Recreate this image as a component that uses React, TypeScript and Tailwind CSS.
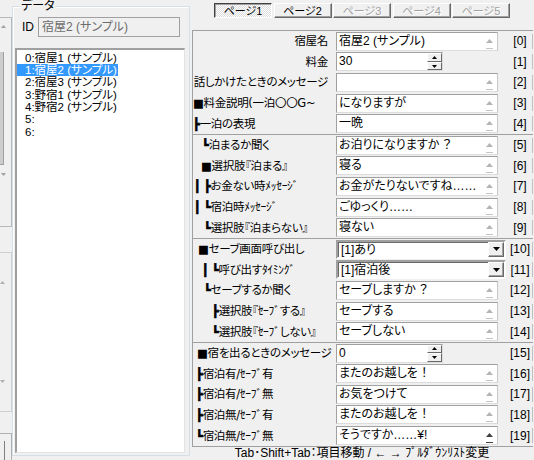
import React from "react";

type Kind = "text" | "spin" | "combo";
interface RowDef {
  label: string;
  align: "left" | "right";
  pl: string;
  kind: Kind;
  value: string;
  idx: number;
  dark?: boolean;
}

const sectionA: RowDef[] = [
  { label: "宿屋名", align: "right", pl: "", kind: "text", value: "宿屋2 (サンプル)", idx: 0 },
  { label: "料金", align: "right", pl: "", kind: "spin", value: "30", idx: 1 },
  { label: "話しかけたときのメッセージ", align: "right", pl: "", kind: "text", value: "", idx: 2 },
  { label: "■料金説明(一泊〇〇G~", align: "left", pl: "pl-[0px]", kind: "text", value: "になりますが", idx: 3 },
  { label: "┣一泊の表現", align: "left", pl: "pl-[0px]", kind: "text", value: "一晩", idx: 4 },
];
const sectionB: RowDef[] = [
  { label: "┗泊まるか聞く", align: "left", pl: "pl-[9px]", kind: "text", value: "お泊りになりますか ？", idx: 5 },
  { label: "■選択肢『泊まる』", align: "left", pl: "pl-[8px]", kind: "text", value: "寝る", idx: 6 },
  { label: "┃ ┣お金ない時ﾒｯｾｰｼﾞ", align: "left", pl: "pl-[1px]", kind: "text", value: "お金がたりないですね……", idx: 7 },
  { label: "┃ ┗宿泊時ﾒｯｾｰｼﾞ", align: "left", pl: "pl-[1px]", kind: "text", value: "ごゆっくり……", idx: 8 },
  { label: "┗選択肢『泊まらない』", align: "left", pl: "pl-[11px]", kind: "text", value: "寝ない", idx: 9 },
];
const sectionC: RowDef[] = [
  { label: "■セーブ画面呼び出し", align: "left", pl: "pl-[5px]", kind: "combo", value: "[1]あり", idx: 10 },
  { label: "┃ ┗呼び出すﾀｲﾐﾝｸﾞ", align: "left", pl: "pl-[9px]", kind: "combo", value: "[1]宿泊後", idx: 11 },
  { label: "┗セーブするか聞く", align: "left", pl: "pl-[11px]", kind: "text", value: "セーブしますか ？", idx: 12 },
  { label: "┣選択肢『ｾｰﾌﾞする』", align: "left", pl: "pl-[19px]", kind: "text", value: "セーブする", idx: 13 },
  { label: "┗選択肢『ｾｰﾌﾞしない』", align: "left", pl: "pl-[19px]", kind: "text", value: "セーブしない", idx: 14 },
];
const sectionD: RowDef[] = [
  { label: "■宿を出るときのメッセージ", align: "left", pl: "pl-[4px]", kind: "spin", value: "0", idx: 15 },
  { label: "┣宿泊有/ｾｰﾌﾞ有", align: "left", pl: "pl-[3px]", kind: "text", value: "またのお越しを ！", idx: 16 },
  { label: "┣宿泊有/ｾｰﾌﾞ無", align: "left", pl: "pl-[3px]", kind: "text", value: "お気をつけて", idx: 17 },
  { label: "┣宿泊無/ｾｰﾌﾞ有", align: "left", pl: "pl-[3px]", kind: "text", value: "またのお越しを ！", idx: 18 },
  { label: "┗宿泊無/ｾｰﾌﾞ無", align: "left", pl: "pl-[3px]", kind: "text", value: "そうですか……¥!", idx: 19, dark: true },
];

const MARKS = "┣┗┃";

function Label({ text }: { text: string }) {
  const parts: { t: string; mark: boolean }[] = [];
  for (const ch of Array.from(text)) {
    const mark = MARKS.includes(ch);
    const last = parts[parts.length - 1];
    if (last && last.mark === mark) last.t += ch;
    else parts.push({ t: ch, mark });
  }
  return (
    <>
      {parts.map((p, i) =>
        p.mark ? (
          <span key={i} className="font-bold [-webkit-text-stroke:0.6px_#000]">
            {p.t}
          </span>
        ) : (
          <span key={i}>{p.t}</span>
        )
      )}
    </>
  );
}

function TextBox({ value, dark }: { value: string; dark?: boolean }) {
  return (
    <div className="flex h-[19px] w-[162px] border border-t-[#a0a0a0] border-l-[#a0a0a0] border-b-[#dcdcdc] border-r-[#c8c8c8] bg-white">
      <div className="flex-1 overflow-hidden whitespace-nowrap pl-[2px] text-[12px] leading-[16px]">{value}</div>
      <div className="mr-[1px] flex w-[13px] flex-col items-center justify-between pt-[6px] pb-[1px]">
        <svg width="7" height="4" viewBox="0 0 7 4">
          <polygon points="0,4 3.5,0 7,4" fill={dark ? "#404040" : "#b4b4b4"} />
        </svg>
        <div className={dark ? "h-px w-[7px] bg-[#404040]" : "h-px w-[7px] bg-[#c4c4c4]"} />
      </div>
    </div>
  );
}

function SpinBtn({ up }: { up?: boolean }) {
  return (
    <div className="flex flex-1 items-center justify-center border border-t-white border-l-white border-b-[#696969] border-r-[#696969] bg-[#f0f0f0]">
      <svg width="5" height="3" viewBox="0 0 5 3">
        {up ? <polygon points="0,3 2.5,0 5,3" fill="#000" /> : <polygon points="0,0 2.5,3 5,0" fill="#000" />}
      </svg>
    </div>
  );
}

function SpinBox({ value }: { value: string }) {
  return (
    <div className="flex h-[19px] w-[107px] border border-t-[#a0a0a0] border-l-[#a0a0a0] border-b-[#dcdcdc] border-r-[#dcdcdc] bg-white">
      <div className="flex-1 whitespace-nowrap pl-[2px] text-[12px] leading-[16px]">{value}</div>
      <div className="flex h-full w-[15px] flex-col">
        <SpinBtn up />
        <SpinBtn />
      </div>
    </div>
  );
}

function Combo({ value }: { value: string }) {
  return (
    <div className="flex h-[19px] w-[170px] border-2 border-t-[#a0a0a0] border-l-[#a0a0a0] border-b-white border-r-white bg-white shadow-[inset_1px_1px_0_#696969]">
      <div className="flex-1 whitespace-nowrap pl-[3px] pt-[1px] text-[12px] leading-[14px]">{value}</div>
      <div className="flex h-full w-[16px] items-center justify-center border border-t-white border-l-white border-b-[#696969] border-r-[#696969] bg-[#f0f0f0] shadow-[inset_-1px_-1px_0_#a0a0a0]">
        <svg width="7" height="4" viewBox="0 0 7 4">
          <polygon points="0,0 3.5,4 7,0" fill="#000" />
        </svg>
      </div>
    </div>
  );
}

function Row({ r }: { r: RowDef }) {
  return (
    <div className="flex h-[20.6px] items-center">
      <div
        className={
          r.align === "right"
            ? "w-[143px] shrink-0 whitespace-nowrap pr-[8px] text-right text-[11.5px] leading-[14px] tracking-[-0.3px] font-['DejaVu_Sans','Noto_Sans_CJK_JP',sans-serif]"
            : `w-[143px] shrink-0 whitespace-nowrap text-left text-[11.5px] leading-[14px] tracking-[-0.3px] font-['DejaVu_Sans','Noto_Sans_CJK_JP',sans-serif] ${r.pl}`
        }
      >
        <Label text={r.label} />
      </div>
      <div className="flex w-[172px] shrink-0 items-center">
        {r.kind === "text" && <TextBox value={r.value} dark={r.dark} />}
        {r.kind === "spin" && <SpinBox value={r.value} />}
        {r.kind === "combo" && <Combo value={r.value} />}
      </div>
      <div className="flex h-full w-[25px] shrink-0 items-center">
        <span className="flex-1 text-center text-[12px] leading-[14px]">[{r.idx}]</span>
        <div className="h-[15px] w-px bg-[#c0c0c0]" />
      </div>
    </div>
  );
}

function TabBtn({ label, state }: { label: string; state: "pressed" | "normal" | "disabled" }) {
  if (state === "pressed") {
    return (
      <div className="flex h-[15px] w-[58px] items-center justify-center border border-t-[#404040] border-l-[#404040] border-b-white border-r-white bg-[repeating-conic-gradient(#ffffff_0_25%,#dcdcdc_0_50%)] bg-[length:2px_2px] shadow-[inset_1px_1px_0_#a0a0a0] text-[11px] leading-[12px]">
        {label}
      </div>
    );
  }
  return (
    <div
      className={
        state === "disabled"
          ? "flex h-[15px] w-[58px] items-center justify-center border border-t-white border-l-white border-b-[#696969] border-r-[#696969] bg-[#f0f0f0] shadow-[inset_-1px_-1px_0_#a0a0a0] text-[11px] leading-[12px] text-[#a0a0a0] [text-shadow:1px_1px_0_#ffffff]"
          : "flex h-[15px] w-[58px] items-center justify-center border border-t-white border-l-white border-b-[#696969] border-r-[#696969] bg-[#f0f0f0] shadow-[inset_-1px_-1px_0_#a0a0a0] text-[11px] leading-[12px]"
      }
    >
      {label}
    </div>
  );
}

const items = ["0:宿屋1 (サンプル)", "1:宿屋2 (サンプル)", "2:宿屋3 (サンプル)", "3:野宿1 (サンプル)", "4:野宿2 (サンプル)", "5:", "6:"];

export default function App() {
  return (
    <div className="flex h-[460px] w-[534px] overflow-hidden bg-[#f0f0f0] font-['Liberation_Sans','DejaVu_Sans','Noto_Sans_CJK_JP',sans-serif] text-black [font-feature-settings:'palt']">
      {/* left stub of another panel */}
      <div className="flex w-[12px] shrink-0 flex-col">
        <div className="h-[17px]" />
        <div className="flex h-[210px] flex-col items-start border-t border-r border-b border-[#b9b9b9]">
          <div className="pl-[1px] pt-[7px]">
            <svg width="5" height="3" viewBox="0 0 5 3"><polygon points="0,3 2.5,0 5,3" fill="#a0a0a0" /></svg>
          </div>
          <div className="mt-[24px] h-[113px] w-[4px] border-r border-b border-[#a0a0a0] bg-[#cdcdcd]" />
          <div className="pl-[1px] pt-[8px]">
            <svg width="5" height="3" viewBox="0 0 5 3"><polygon points="0,0 2.5,3 5,0" fill="#a0a0a0" /></svg>
          </div>
        </div>
        <div className="h-[25px]" />
        <div className="flex h-[160px] flex-col items-start justify-between border-t border-b border-r border-[#d0d0d0] py-[28px]">
          <svg width="5" height="3" viewBox="0 0 5 3"><polygon points="0,3 2.5,0 5,3" fill="#b0b0b0" /></svg>
          <svg width="5" height="3" viewBox="0 0 5 3"><polygon points="0,0 2.5,3 5,0" fill="#b0b0b0" /></svg>
        </div>
        <div className="h-[21px]" />
        <div className="flex flex-1 border-t border-r border-[#b0b0b0] pt-[7px]">
          <div className="h-full w-[5px] border-r border-[#808080]" />
        </div>
      </div>

      {/* データ group */}
      <div className="relative mt-[6px] mb-[4px] flex w-[178px] shrink-0 flex-col border border-[#d5dfe5] shadow-[inset_1px_1px_0_#ffffff]">
        <div className="absolute -top-[7px] left-[7px] bg-[#f0f0f0] px-[1px] text-[12px] leading-[13px]">データ</div>
        <div className="mt-[10px] flex h-[20px] items-center">
          <div className="w-[25px] pl-[9px] text-[12px] leading-[14px]">ID</div>
          <div className="flex h-[20px] w-[142px] items-center border border-[#a0a0a0] bg-[#f0f0f0] pl-[3px] text-[12px] leading-[14px] text-[#6d6d6d]">
            宿屋2 (サンプル)
          </div>
        </div>
        <div className="mt-[11px] mb-[2px] ml-[2px] w-[170px] flex-1 overflow-hidden border-t-2 border-l-2 border-r border-b border-t-[#a0a0a0] border-l-[#a0a0a0] border-r-[#e3e3e3] border-b-[#e3e3e3] bg-white pt-[1.5px]">
          {items.map((t, i) => (
            <div key={i} className="h-[12.4px] overflow-hidden whitespace-nowrap text-[11.5px] leading-[12.4px]">
              <span className={i === 1 ? "inline-block bg-[#3399ff] pl-[8px] pr-[1px] text-white" : "inline-block pl-[8px] pr-[1px]"}>{t}</span>
            </div>
          ))}
        </div>
      </div>

      {/* right side */}
      <div className="flex w-[344px] shrink-0 flex-col">
        <div className="flex h-[30px] gap-[1.5px] pl-[24px] pt-[3px]">
          <TabBtn label="ページ1" state="pressed" />
          <TabBtn label="ページ2" state="normal" />
          <TabBtn label="ページ3" state="disabled" />
          <TabBtn label="ページ4" state="disabled" />
          <TabBtn label="ページ5" state="disabled" />
        </div>
        <div className="ml-[2px] flex w-[341px] flex-col border-t border-l border-b border-[#a0a0a0]">
          <div>
            {sectionA.map((r) => (
              <Row key={r.idx} r={r} />
            ))}
          </div>
          <div className="border-t border-[#a0a0a0]">
            {sectionB.map((r) => (
              <Row key={r.idx} r={r} />
            ))}
          </div>
          <div className="border-t border-[#a0a0a0]">
            {sectionC.map((r) => (
              <Row key={r.idx} r={r} />
            ))}
          </div>
          <div className="border-t border-[#a0a0a0]">
            {sectionD.map((r) => (
              <Row key={r.idx} r={r} />
            ))}
          </div>
        </div>
        <div className="flex h-[13px] items-center justify-center whitespace-nowrap text-[12px] leading-[13px]">
          Tab･Shift+Tab：項目移動 / ← → ﾌﾟﾙﾀﾞｳﾝﾘｽﾄ変更
        </div>
      </div>
    </div>
  );
}
